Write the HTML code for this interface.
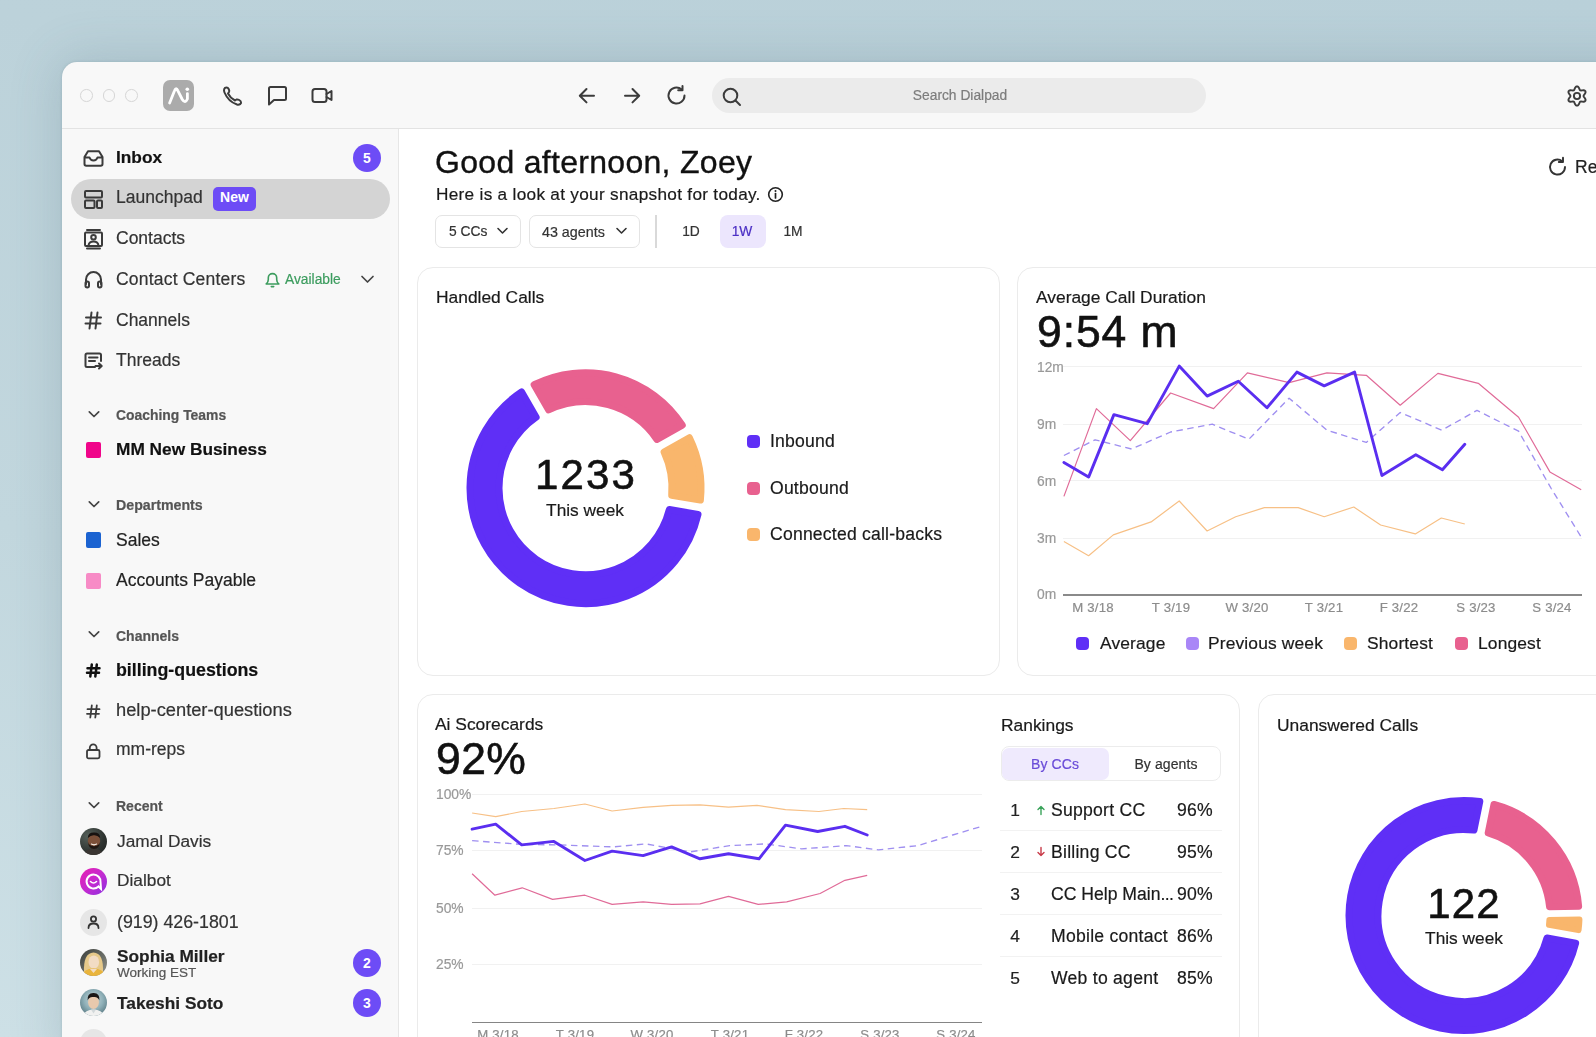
<!DOCTYPE html><html><head><meta charset="utf-8"><style>
html,body{margin:0;padding:0;}
body{width:1596px;height:1037px;overflow:hidden;position:relative;font-family:"Liberation Sans",sans-serif;
background:linear-gradient(15deg,#cde0e6 0%,#c2d7de 35%,#bcd2da 70%,#b9d0d9 100%);}
.a{position:absolute;}
.t{position:absolute;line-height:1;white-space:nowrap;will-change:transform;-webkit-text-stroke:0.2px currentColor;}
svg.a{overflow:visible;}
</style></head><body>
<div class="a" style="left:62px;top:62px;width:1600px;height:1000px;background:#f8f8f8;border-radius:15px 0 0 0;box-shadow:0 0 3px rgba(70,100,115,0.2),0 0 50px 4px rgba(70,100,115,0.2);"></div>
<div class="a" style="left:62px;top:128px;width:1534px;height:1px;background:#e3e3e3;"></div>
<div class="a" style="left:398px;top:129px;width:1px;height:908px;background:#e6e6e6;"></div>
<div class="a" style="left:399px;top:129px;width:1197px;height:908px;background:#ffffff;"></div>
<div class="a" style="left:80.0px;top:89px;width:10.6px;height:10.6px;border:1.9px solid #d6d6d6;border-radius:50%;"></div>
<div class="a" style="left:102.5px;top:89px;width:10.6px;height:10.6px;border:1.9px solid #d6d6d6;border-radius:50%;"></div>
<div class="a" style="left:125.0px;top:89px;width:10.6px;height:10.6px;border:1.9px solid #d6d6d6;border-radius:50%;"></div>
<div class="a" style="left:163px;top:80px;width:31px;height:31px;background:#ababab;border-radius:7px;"></div>
<svg class="a" style="left:163px;top:80px;" width="31" height="31" viewBox="0 0 31 31"><path d="M6.6 23 L11.6 10.6 Q13.1 6.6 14.8 10.6 L19.3 19.5 Q22.2 24 24.4 19 L24.4 13.6" fill="none" stroke="#fff" stroke-width="2.8" stroke-linecap="round" stroke-linejoin="round"/><circle cx="24.3" cy="9.2" r="1.8" fill="#fff"/></svg>
<svg class="a" style="left:222px;top:86px;" width="20" height="20" viewBox="0 0 20 20"><path d="M4.5 1.5 C2 1.5 1.5 4 2.5 6.5 C5 12.5 9 16.5 15 18.5 C17.5 19.2 19.5 17.5 19 16 C18.7 14.5 16 13 14.5 13.5 L13 14.5 C10 13 7.5 10.5 6 7.5 L7 6 C7.8 4.5 6.5 1.5 4.5 1.5 Z" fill="none" stroke="#3b3b3b" stroke-width="2" stroke-linecap="round" stroke-linejoin="round"/></svg>
<svg class="a" style="left:267px;top:86px;" width="21" height="20" viewBox="0 0 21 20"><path d="M2 2.5 Q2 1 3.5 1 L17.5 1 Q19 1 19 2.5 L19 12.5 Q19 14 17.5 14 L7 14 L2 18.5 Z" fill="none" stroke="#3b3b3b" stroke-width="2" stroke-linecap="round" stroke-linejoin="round"/></svg>
<svg class="a" style="left:311px;top:87px;" width="23" height="18" viewBox="0 0 23 18"><rect x="1.5" y="2" width="14" height="13" rx="2.5" fill="none" stroke="#3b3b3b" stroke-width="2" stroke-linecap="round" stroke-linejoin="round"/><path d="M15.5 7 L20.5 4 L20.5 13 L15.5 10" fill="none" stroke="#3b3b3b" stroke-width="2" stroke-linecap="round" stroke-linejoin="round"/></svg>
<svg class="a" style="left:578px;top:87px;" width="18" height="18" viewBox="0 0 18 18"><path d="M16 8.7 L2 8.7 M8.5 2 L1.8 8.7 L8.5 15.4" fill="none" stroke="#3b3b3b" stroke-width="2" stroke-linecap="round" stroke-linejoin="round"/></svg>
<svg class="a" style="left:623px;top:87px;" width="18" height="18" viewBox="0 0 18 18"><path d="M2 8.7 L16 8.7 M9.5 2 L16.2 8.7 L9.5 15.4" fill="none" stroke="#3b3b3b" stroke-width="2" stroke-linecap="round" stroke-linejoin="round"/></svg>
<svg class="a" style="left:666px;top:85px;" width="22" height="22" viewBox="0 0 22 22"><path d="M18.5 10.5 A8 8 0 1 1 15.5 4.3" fill="none" stroke="#3b3b3b" stroke-width="2" stroke-linecap="round" stroke-linejoin="round"/><path d="M16.5 1 L16.5 5.3 L12.2 5.3" fill="none" stroke="#3b3b3b" stroke-width="2" stroke-linecap="round" stroke-linejoin="round"/></svg>
<div class="a" style="left:712px;top:78px;width:494px;height:35px;background:#ebebeb;border-radius:18px;"></div>
<svg class="a" style="left:722px;top:87px;" width="20" height="20" viewBox="0 0 20 20"><circle cx="8.5" cy="8.5" r="6.8" fill="none" stroke="#3b3b3b" stroke-width="2" stroke-linecap="round" stroke-linejoin="round"/><path d="M13.5 13.5 L18 18" fill="none" stroke="#3b3b3b" stroke-width="2" stroke-linecap="round" stroke-linejoin="round"/></svg>
<div class="t" style="left:660.0px;width:600px;text-align:center;top:89.12px;font-size:13.8px;font-weight:400;color:#7c7c7c;letter-spacing:0px;">Search Dialpad</div>
<svg class="a" style="left:1564.6px;top:83.7px;" width="24" height="24" viewBox="0 0 24 24"><path d="M12.00 2.30 L12.98 2.66 L13.79 3.59 L14.35 4.77 L14.77 5.78 L15.25 6.37 L16.00 6.49 L17.09 6.35 L18.39 6.25 L19.60 6.48 L20.40 7.15 L20.58 8.18 L20.17 9.34 L19.44 10.42 L18.77 11.29 L18.50 12.00 L18.77 12.71 L19.44 13.58 L20.17 14.66 L20.58 15.82 L20.40 16.85 L19.60 17.52 L18.39 17.75 L17.09 17.65 L16.00 17.51 L15.25 17.63 L14.77 18.22 L14.35 19.23 L13.79 20.41 L12.98 21.34 L12.00 21.70 L11.02 21.34 L10.21 20.41 L9.65 19.23 L9.23 18.22 L8.75 17.63 L8.00 17.51 L6.91 17.65 L5.61 17.75 L4.40 17.52 L3.60 16.85 L3.42 15.82 L3.83 14.66 L4.56 13.58 L5.23 12.71 L5.50 12.00 L5.23 11.29 L4.56 10.42 L3.83 9.34 L3.42 8.18 L3.60 7.15 L4.40 6.48 L5.61 6.25 L6.91 6.35 L8.00 6.49 L8.75 6.37 L9.23 5.78 L9.65 4.77 L10.21 3.59 L11.02 2.66 Z" fill="none" stroke="#3b3b3b" stroke-width="1.9" stroke-linejoin="round"/><circle cx="12" cy="12" r="3.1" fill="none" stroke="#3b3b3b" stroke-width="1.9"/></svg>
<div class="a" style="left:71px;top:179px;width:319px;height:40px;background:#d4d4d4;border-radius:20px;"></div>
<svg class="a" style="left:83px;top:150px;" width="21" height="17" viewBox="0 0 21 17"><path d="M5 1.2 L16 1.2 L19.5 7 L19.5 14 Q19.5 15.8 17.7 15.8 L3.3 15.8 Q1.5 15.8 1.5 14 L1.5 7 Z M1.5 7.5 L6.5 7.5 Q7.5 10.5 10.5 10.5 Q13.5 10.5 14.5 7.5 L19.5 7.5" fill="none" stroke="#3b3b3b" stroke-width="2" stroke-linecap="round" stroke-linejoin="round"/></svg>
<div class="t" style="left:116.0px;top:149.35px;font-size:17.3px;font-weight:700;color:#111;letter-spacing:0px;">Inbox</div>
<div class="a" style="left:353px;top:144px;width:28px;height:28px;border-radius:50%;background:#6d4cf6;color:#fff;font-size:14px;font-weight:700;line-height:28px;text-align:center;">5</div>
<svg class="a" style="left:84px;top:190px;" width="19" height="19" viewBox="0 0 19 19"><rect x="1" y="1" width="17" height="6.5" rx="1" fill="none" stroke="#3b3b3b" stroke-width="2" stroke-linecap="round" stroke-linejoin="round"/><rect x="1" y="10.5" width="9.5" height="7.5" rx="1" fill="none" stroke="#3b3b3b" stroke-width="2" stroke-linecap="round" stroke-linejoin="round"/><rect x="13" y="10.5" width="5" height="7.5" rx="1" fill="none" stroke="#3b3b3b" stroke-width="2" stroke-linecap="round" stroke-linejoin="round"/></svg>
<div class="t" style="left:116.0px;top:189.28px;font-size:17.5px;font-weight:400;color:#333;letter-spacing:0px;">Launchpad</div>
<div class="a" style="left:213px;top:187px;width:43px;height:24px;border-radius:5px;background:#6d4cf6;color:#fff;font-size:14px;font-weight:700;line-height:21px;text-align:center;">New</div>
<svg class="a" style="left:84px;top:229px;" width="19" height="21" viewBox="0 0 19 21"><path d="M3 1 L16 1 M3 19.5 L16 19.5" fill="none" stroke="#3b3b3b" stroke-width="2" stroke-linecap="round" stroke-linejoin="round"/><rect x="1" y="3.5" width="17" height="13.5" rx="1" fill="none" stroke="#3b3b3b" stroke-width="2" stroke-linecap="round" stroke-linejoin="round"/><circle cx="9.5" cy="8.3" r="2.3" fill="none" stroke="#3b3b3b" stroke-width="2" stroke-linecap="round" stroke-linejoin="round"/><path d="M4.5 16.5 Q5 12.5 9.5 12.5 Q14 12.5 14.5 16.5" fill="none" stroke="#3b3b3b" stroke-width="2" stroke-linecap="round" stroke-linejoin="round"/></svg>
<div class="t" style="left:116.0px;top:230.08px;font-size:17.5px;font-weight:400;color:#333;letter-spacing:0px;">Contacts</div>
<svg class="a" style="left:84px;top:270px;" width="19" height="19" viewBox="0 0 19 19"><path d="M2 14 L2 9.5 A7.5 7.5 0 0 1 17 9.5 L17 14" fill="none" stroke="#3b3b3b" stroke-width="2" stroke-linecap="round" stroke-linejoin="round"/><rect x="1.5" y="11.5" width="3.5" height="6" rx="1.7" fill="none" stroke="#3b3b3b" stroke-width="2" stroke-linecap="round" stroke-linejoin="round"/><rect x="14" y="11.5" width="3.5" height="6" rx="1.7" fill="none" stroke="#3b3b3b" stroke-width="2" stroke-linecap="round" stroke-linejoin="round"/></svg>
<div class="t" style="left:116.0px;top:271.08px;font-size:17.5px;font-weight:400;color:#333;letter-spacing:0.2px;">Contact Centers</div>
<svg class="a" style="left:264px;top:271px;" width="17" height="18" viewBox="0 0 17 18"><path d="M2.2 13 Q4.3 11.5 4.3 8.5 L4.3 6.8 A4.2 4.2 0 0 1 12.7 6.8 L12.7 8.5 Q12.7 11.5 14.8 13 Z M7.3 15.6 L9.7 15.6" fill="none" stroke="#3c9c5e" stroke-width="1.6" stroke-linecap="round" stroke-linejoin="round"/></svg>
<div class="t" style="left:285.0px;top:273.32px;font-size:13.8px;font-weight:400;color:#3c9c5e;letter-spacing:0px;">Available</div>
<svg class="a" style="left:361px;top:275px;" width="13" height="9" viewBox="0 0 13 9"><path d="M1 1.5 L6.5 7 L12 1.5" fill="none" stroke="#444" stroke-width="1.7" stroke-linecap="round" stroke-linejoin="round"/></svg>
<svg class="a" style="left:84px;top:311px;" width="19" height="19" viewBox="0 0 19 19"><path d="M7.5 1.5 L5.5 17.5 M13.5 1.5 L11.5 17.5 M2 6.5 L17 6.5 M1.5 12.5 L16.5 12.5" fill="none" stroke="#3b3b3b" stroke-width="2" stroke-linecap="round" stroke-linejoin="round"/></svg>
<div class="t" style="left:116.0px;top:312.28px;font-size:17.5px;font-weight:400;color:#333;letter-spacing:0px;">Channels</div>
<svg class="a" style="left:84px;top:352px;" width="20" height="20" viewBox="0 0 20 20"><path d="M11 15 L3 15 Q1.5 15 1.5 13.5 L1.5 3 Q1.5 1.5 3 1.5 L15.5 1.5 Q17 1.5 17 3 L17 9" fill="none" stroke="#3b3b3b" stroke-width="2" stroke-linecap="round" stroke-linejoin="round"/><path d="M5 5.5 L13.5 5.5 M5 9 L11 9 M11.5 14 L17.5 14 M15 11.5 L17.7 14 L15 16.5" fill="none" stroke="#3b3b3b" stroke-width="2" stroke-linecap="round" stroke-linejoin="round"/></svg>
<div class="t" style="left:116.0px;top:352.28px;font-size:17.5px;font-weight:400;color:#333;letter-spacing:0px;">Threads</div>
<svg class="a" style="left:87.5px;top:410px;" width="12" height="9" viewBox="0 0 12 9"><path d="M1.3 1.8 L6 6.5 L10.7 1.8" fill="none" stroke="#444" stroke-width="1.7" stroke-linecap="round" stroke-linejoin="round"/></svg>
<div class="t" style="left:116.0px;top:409.33px;font-size:13.9px;font-weight:700;color:#555;letter-spacing:0px;">Coaching Teams</div>
<div class="a" style="left:85.7px;top:442px;width:15.7px;height:15.7px;background:#f0058a;border-radius:2px;"></div>
<div class="t" style="left:116.0px;top:441.25px;font-size:17.3px;font-weight:700;color:#111;letter-spacing:0px;">MM New Business</div>
<svg class="a" style="left:87.5px;top:500px;" width="12" height="9" viewBox="0 0 12 9"><path d="M1.3 1.8 L6 6.5 L10.7 1.8" fill="none" stroke="#444" stroke-width="1.7" stroke-linecap="round" stroke-linejoin="round"/></svg>
<div class="t" style="left:116.0px;top:498.28px;font-size:14.2px;font-weight:700;color:#555;letter-spacing:0px;">Departments</div>
<div class="a" style="left:85.7px;top:532.3px;width:15.7px;height:15.7px;background:#1b63d1;border-radius:2px;"></div>
<div class="t" style="left:116.0px;top:532.28px;font-size:17.5px;font-weight:400;color:#222;letter-spacing:0px;">Sales</div>
<div class="a" style="left:85.7px;top:573px;width:15.7px;height:15.7px;background:#f78bc6;border-radius:2px;"></div>
<div class="t" style="left:116.0px;top:572.18px;font-size:17.5px;font-weight:400;color:#222;letter-spacing:0px;">Accounts Payable</div>
<svg class="a" style="left:87.5px;top:630px;" width="12" height="9" viewBox="0 0 12 9"><path d="M1.3 1.8 L6 6.5 L10.7 1.8" fill="none" stroke="#444" stroke-width="1.7" stroke-linecap="round" stroke-linejoin="round"/></svg>
<div class="t" style="left:116.0px;top:628.65px;font-size:14px;font-weight:700;color:#555;letter-spacing:0px;">Channels</div>
<svg class="a" style="left:86px;top:663px;" width="15" height="15" viewBox="0 0 15 15"><path d="M5.8 1.5 L4.3 13.5 M10.8 1.5 L9.3 13.5 M1.5 5.2 L13.5 5.2 M1 9.8 L13 9.8" fill="none" stroke="#111" stroke-width="2.5" stroke-linecap="round"/></svg>
<div class="t" style="left:116.0px;top:661.93px;font-size:17.8px;font-weight:700;color:#111;letter-spacing:0px;">billing-questions</div>
<svg class="a" style="left:86px;top:703.5px;" width="15" height="15" viewBox="0 0 15 15"><path d="M5.8 1.5 L4.3 13.5 M10.8 1.5 L9.3 13.5 M1.5 5.2 L13.5 5.2 M1 9.8 L13 9.8" fill="none" stroke="#3b3b3b" stroke-width="1.8" stroke-linecap="round"/></svg>
<div class="t" style="left:116.0px;top:700.51px;font-size:18.3px;font-weight:400;color:#333;letter-spacing:0px;">help-center-questions</div>
<svg class="a" style="left:86px;top:743px;" width="15" height="17" viewBox="0 0 15 17"><rect x="1" y="7" width="12.5" height="8.3" rx="1.5" fill="none" stroke="#3b3b3b" stroke-width="1.8"/><path d="M3.8 7 L3.8 4.8 A3.4 3.4 0 0 1 10.6 4.8 L10.6 7" fill="none" stroke="#3b3b3b" stroke-width="1.8"/></svg>
<div class="t" style="left:116.0px;top:741.48px;font-size:17.5px;font-weight:400;color:#333;letter-spacing:0px;">mm-reps</div>
<svg class="a" style="left:87.5px;top:801px;" width="12" height="9" viewBox="0 0 12 9"><path d="M1.3 1.8 L6 6.5 L10.7 1.8" fill="none" stroke="#444" stroke-width="1.7" stroke-linecap="round" stroke-linejoin="round"/></svg>
<div class="t" style="left:116.0px;top:798.85px;font-size:14px;font-weight:700;color:#555;letter-spacing:0px;">Recent</div>
<div class="a" style="left:80px;top:827.5px;width:27px;height:27px;border-radius:50%;background:radial-gradient(circle at 30% 30%,#55605a 0%,#2e3330 60%,#1e2220 100%);"></div>
<svg class="a" style="left:80px;top:827.5px;" width="27" height="27" viewBox="0 0 27 27"><clipPath id="cj"><circle cx="13.5" cy="13.5" r="13.5"/></clipPath><g clip-path="url(#cj)"><path d="M3 28 Q5 20.5 13.5 20.5 Q22 20.5 24 28 Z" fill="#3a3532"/><ellipse cx="14" cy="13" rx="6.2" ry="7.6" fill="#7b5039"/><path d="M7.8 10 Q8 4.5 14 4.6 Q20 4.5 20.2 10 Q17 7 14 7.3 Q11 7 7.8 10Z" fill="#171210"/><path d="M8 14 Q8.5 21 14 21 Q19.5 21 20 14 Q19 18 14 18.2 Q9 18 8 14Z" fill="#1e1612"/><path d="M11.2 16 Q14 17.6 16.8 16 Q14 18 11.2 16Z" fill="#f4efe8" stroke="#f4efe8" stroke-width="0.8"/></g></svg>
<div class="a" style="left:80px;top:867.5px;width:27px;height:27px;border-radius:50%;background:linear-gradient(135deg,#e81fb0 0%,#c52bd0 50%,#8b2fe0 100%);"></div>
<svg class="a" style="left:80px;top:867.5px;" width="27" height="27" viewBox="0 0 27 27"><path d="M13.5 6.5 A7 7 0 1 0 18.5 18.5 L21 21 L20.5 14 A7 7 0 0 0 13.5 6.5 Z" fill="none" stroke="#fff" stroke-width="2"/><path d="M10.5 13.5 Q13.5 16.5 16.5 13.5" fill="none" stroke="#fff" stroke-width="1.6" stroke-linecap="round"/></svg>
<div class="a" style="left:80px;top:908.5px;width:27px;height:27px;border-radius:50%;background:#e6e6e6;"></div>
<svg class="a" style="left:80px;top:908.5px;" width="27" height="27" viewBox="0 0 27 27"><circle cx="13.5" cy="10" r="2.6" fill="none" stroke="#333" stroke-width="1.8"/><path d="M8.5 19 Q8.5 14.5 13.5 14.5 Q18.5 14.5 18.5 19" fill="none" stroke="#333" stroke-width="1.8" stroke-linecap="round"/></svg>
<div class="a" style="left:80px;top:948.8px;width:27px;height:27px;border-radius:50%;overflow:hidden;background:linear-gradient(135deg,#3b3f3b 0%,#6d706a 60%,#9a9a90 100%);"></div>
<svg class="a" style="left:80px;top:948.8px;" width="27" height="27" viewBox="0 0 27 27"><clipPath id="c1"><circle cx="13.5" cy="13.5" r="13.5"/></clipPath><g clip-path="url(#c1)"><path d="M4 24 Q3 4 13.5 3.5 Q24 4 23 24 Z" fill="#e6c98a"/><ellipse cx="13.8" cy="13" rx="5.3" ry="6.6" fill="#f2dcc4"/><path d="M0 29 Q3 19.5 13.5 19.5 Q24 19.5 27 29 Z" fill="#e9b43c"/><path d="M10 20 L13.5 24 L17 20Z" fill="#f2dcc4"/></g></svg>
<div class="a" style="left:80px;top:988.5px;width:27px;height:27px;border-radius:50%;overflow:hidden;background:radial-gradient(circle at 50% 40%,#c9d8dc 0%,#8fb0b8 45%,#3f5f68 100%);"></div>
<svg class="a" style="left:80px;top:988.5px;" width="27" height="27" viewBox="0 0 27 27"><clipPath id="c2"><circle cx="13.5" cy="13.5" r="13.5"/></clipPath><g clip-path="url(#c2)"><ellipse cx="13.5" cy="13.3" rx="5.4" ry="6.8" fill="#e8c9ad"/><path d="M7.6 11.5 Q7 3.8 13.5 4 Q20 3.8 19.4 11.5 Q18 7.5 13.5 8 Q9 7.5 7.6 11.5Z" fill="#1a1716"/><path d="M2 29 Q4 20.5 13.5 20.5 Q23 20.5 25 29 Z" fill="#f1f1f0"/><path d="M11 20.5 L13.5 24.5 L16 20.5 Z" fill="#d2d8da"/></g></svg>
<div class="a" style="left:80px;top:1029px;width:27px;height:27px;border-radius:50%;background:#e6e6e6;"></div>
<div class="t" style="left:116.5px;top:833.25px;font-size:17.3px;font-weight:400;color:#333;letter-spacing:0px;">Jamal Davis</div>
<div class="t" style="left:116.5px;top:872.45px;font-size:17.3px;font-weight:400;color:#333;letter-spacing:0px;">Dialbot</div>
<div class="t" style="left:116.5px;top:914.13px;font-size:17.8px;font-weight:400;color:#333;letter-spacing:0px;">(919) 426-1801</div>
<div class="t" style="left:116.5px;top:948.05px;font-size:17.3px;font-weight:700;color:#222;letter-spacing:0px;">Sophia Miller</div>
<div class="t" style="left:116.5px;top:966.07px;font-size:13.5px;font-weight:400;color:#555;letter-spacing:0px;">Working EST</div>
<div class="t" style="left:116.5px;top:995.05px;font-size:17.3px;font-weight:700;color:#222;letter-spacing:0px;">Takeshi Soto</div>
<div class="a" style="left:353px;top:948.5px;width:28px;height:28px;border-radius:50%;background:#6d4cf6;color:#fff;font-size:14px;font-weight:700;line-height:28px;text-align:center;">2</div>
<div class="a" style="left:353px;top:988.5px;width:28px;height:28px;border-radius:50%;background:#6d4cf6;color:#fff;font-size:14px;font-weight:700;line-height:28px;text-align:center;">3</div>
<div class="t" style="left:435.0px;top:146.11px;font-size:32px;font-weight:400;color:#111;letter-spacing:0.3px;-webkit-text-stroke:0.35px #111;">Good afternoon, Zoey</div>
<div class="t" style="left:435.5px;top:185.74px;font-size:17.2px;font-weight:400;color:#1a1a1a;letter-spacing:0.3px;">Here is a look at your snapshot for today.</div>
<svg class="a" style="left:767px;top:186px;" width="17" height="17" viewBox="0 0 17 17"><circle cx="8.5" cy="8.5" r="6.8" fill="none" stroke="#222" stroke-width="1.6"/><path d="M8.5 7.5 L8.5 12" stroke="#222" stroke-width="1.7" stroke-linecap="round"/><circle cx="8.5" cy="5" r="1" fill="#222"/></svg>
<div class="a" style="left:435px;top:215px;width:86px;height:33px;box-sizing:border-box;border:1px solid #e4e4e4;border-radius:7px;background:#fff;"></div>
<div class="t" style="left:448.8px;top:225.02px;font-size:13.8px;font-weight:400;color:#333;letter-spacing:0px;">5 CCs</div>
<svg class="a" style="left:496px;top:226px;" width="13" height="10" viewBox="0 0 13 10"><path d="M2 2.5 L6.5 7 L11 2.5" fill="none" stroke="#333" stroke-width="1.6" stroke-linecap="round" stroke-linejoin="round"/></svg>
<div class="a" style="left:528.5px;top:215px;width:111.5px;height:33px;box-sizing:border-box;border:1px solid #e4e4e4;border-radius:7px;background:#fff;"></div>
<div class="t" style="left:542.3px;top:224.59px;font-size:14.3px;font-weight:400;color:#333;letter-spacing:0px;">43 agents</div>
<svg class="a" style="left:615px;top:226px;" width="13" height="10" viewBox="0 0 13 10"><path d="M2 2.5 L6.5 7 L11 2.5" fill="none" stroke="#333" stroke-width="1.6" stroke-linecap="round" stroke-linejoin="round"/></svg>
<div class="a" style="left:654.5px;top:215px;width:2px;height:33px;background:#d9d9d9;"></div>
<div class="t" style="left:391.0px;width:600px;text-align:center;top:225.02px;font-size:13.8px;font-weight:400;color:#333;letter-spacing:0px;">1D</div>
<div class="a" style="left:719.5px;top:215px;width:46px;height:33px;background:#ece6fd;border-radius:8px;"></div>
<div class="t" style="left:442.4px;width:600px;text-align:center;top:225.02px;font-size:13.8px;font-weight:400;color:#4b2fc4;letter-spacing:0px;">1W</div>
<div class="t" style="left:493.3px;width:600px;text-align:center;top:225.02px;font-size:13.8px;font-weight:400;color:#333;letter-spacing:0px;">1M</div>
<svg class="a" style="left:1547px;top:156px;" width="22" height="22" viewBox="0 0 22 22"><path d="M18 11 A7.5 7.5 0 1 1 15.2 5.2" fill="none" stroke="#333" stroke-width="1.9" stroke-linecap="round"/><path d="M16 1.8 L16 6 L11.8 6" fill="none" stroke="#333" stroke-width="1.9" stroke-linecap="round" stroke-linejoin="round"/></svg>
<div class="t" style="left:1575.0px;top:158.68px;font-size:17.5px;font-weight:400;color:#222;letter-spacing:0px;">Re</div>
<div class="a" style="left:417px;top:267px;width:583px;height:409px;box-sizing:border-box;border:1.5px solid #ebebeb;border-radius:16px;background:#fff;"></div>
<div class="a" style="left:1017px;top:267px;width:700px;height:409px;box-sizing:border-box;border:1.5px solid #ebebeb;border-radius:16px;background:#fff;"></div>
<div class="a" style="left:416.5px;top:694px;width:823px;height:500px;box-sizing:border-box;border:1.5px solid #ebebeb;border-radius:16px;background:#fff;"></div>
<div class="a" style="left:1257.5px;top:694px;width:500px;height:500px;box-sizing:border-box;border:1.5px solid #ebebeb;border-radius:16px;background:#fff;"></div>
<div class="t" style="left:435.5px;top:289.07px;font-size:17.4px;font-weight:400;color:#1a1a1a;letter-spacing:0px;">Handled Calls</div>
<svg class="a" style="left:0px;top:0px;" width="1596" height="1037" viewBox="0 0 1596 1037"><path d="M698.00 514.37 A115.5 115.5 0 1 1 521.59 391.99 L536.13 417.17 A86.5 86.5 0 1 0 669.32 509.57 Z" fill="#5f2ff6" stroke="#5f2ff6" stroke-width="7.0" stroke-linejoin="round"/><path d="M534.14 384.75 A115.5 115.5 0 0 1 682.26 425.13 L656.96 439.45 A86.5 86.5 0 0 0 548.67 409.93 Z" fill="#e8618f" stroke="#e8618f" stroke-width="7.0" stroke-linejoin="round"/><path d="M689.40 437.74 A115.5 115.5 0 0 1 700.39 500.08 L671.71 495.28 A86.5 86.5 0 0 0 664.09 452.06 Z" fill="#f9b66c" stroke="#f9b66c" stroke-width="7.0" stroke-linejoin="round"/></svg>
<div class="t" style="left:285.5px;width:600px;text-align:center;top:454.44px;font-size:42px;font-weight:400;color:#111;letter-spacing:2.2px;-webkit-text-stroke:0.6px #111;">1233</div>
<div class="t" style="left:285.0px;width:600px;text-align:center;top:502.25px;font-size:17.3px;font-weight:400;color:#1a1a1a;letter-spacing:0px;">This week</div>
<div class="a" style="left:747px;top:435.2px;width:13px;height:13px;background:#5f2ff6;border-radius:4px;"></div>
<div class="t" style="left:769.5px;top:433.30px;font-size:17.6px;font-weight:400;color:#1a1a1a;letter-spacing:0.2px;">Inbound</div>
<div class="a" style="left:747px;top:481.7px;width:13px;height:13px;background:#e8618f;border-radius:4px;"></div>
<div class="t" style="left:769.5px;top:479.80px;font-size:17.6px;font-weight:400;color:#1a1a1a;letter-spacing:0.2px;">Outbound</div>
<div class="a" style="left:747px;top:528.2px;width:13px;height:13px;background:#f9b66c;border-radius:4px;"></div>
<div class="t" style="left:769.5px;top:526.30px;font-size:17.6px;font-weight:400;color:#1a1a1a;letter-spacing:0.2px;">Connected call-backs</div>
<div class="t" style="left:1036.0px;top:289.07px;font-size:17.4px;font-weight:400;color:#1a1a1a;letter-spacing:0px;">Average Call Duration</div>
<div class="t" style="left:1036.5px;top:310.42px;font-size:44.5px;font-weight:400;color:#111;letter-spacing:0.9px;-webkit-text-stroke:0.6px #111;">9:54 m</div>
<div class="t" style="left:1037.0px;top:360.52px;font-size:13.8px;font-weight:400;color:#999;letter-spacing:0px;">12m</div>
<div class="a" style="left:1063px;top:366.4px;width:519px;height:1px;background:#f1f1f1;"></div>
<div class="t" style="left:1037.0px;top:417.82px;font-size:13.8px;font-weight:400;color:#999;letter-spacing:0px;">9m</div>
<div class="a" style="left:1063px;top:423.7px;width:519px;height:1px;background:#f1f1f1;"></div>
<div class="t" style="left:1037.0px;top:474.52px;font-size:13.8px;font-weight:400;color:#999;letter-spacing:0px;">6m</div>
<div class="a" style="left:1063px;top:480.4px;width:519px;height:1px;background:#f1f1f1;"></div>
<div class="t" style="left:1037.0px;top:531.62px;font-size:13.8px;font-weight:400;color:#999;letter-spacing:0px;">3m</div>
<div class="a" style="left:1063px;top:537.5px;width:519px;height:1px;background:#f1f1f1;"></div>
<div class="t" style="left:1037.0px;top:588.42px;font-size:13.8px;font-weight:400;color:#999;letter-spacing:0px;">0m</div>
<div class="a" style="left:1063px;top:593.8px;width:519px;height:2px;background:#8a8a8a;"></div>
<div class="t" style="left:793.0px;width:600px;text-align:center;top:601.02px;font-size:13.2px;font-weight:400;color:#8c8c8c;letter-spacing:0.2px;">M 3/18</div>
<div class="t" style="left:870.5px;width:600px;text-align:center;top:601.02px;font-size:13.2px;font-weight:400;color:#8c8c8c;letter-spacing:0.2px;">T 3/19</div>
<div class="t" style="left:947.0px;width:600px;text-align:center;top:601.02px;font-size:13.2px;font-weight:400;color:#8c8c8c;letter-spacing:0.2px;">W 3/20</div>
<div class="t" style="left:1024.3px;width:600px;text-align:center;top:601.02px;font-size:13.2px;font-weight:400;color:#8c8c8c;letter-spacing:0.2px;">T 3/21</div>
<div class="t" style="left:1099.0px;width:600px;text-align:center;top:601.02px;font-size:13.2px;font-weight:400;color:#8c8c8c;letter-spacing:0.2px;">F 3/22</div>
<div class="t" style="left:1175.5px;width:600px;text-align:center;top:601.02px;font-size:13.2px;font-weight:400;color:#8c8c8c;letter-spacing:0.2px;">S 3/23</div>
<div class="t" style="left:1251.5px;width:600px;text-align:center;top:601.02px;font-size:13.2px;font-weight:400;color:#8c8c8c;letter-spacing:0.2px;">S 3/24</div>
<svg class="a" style="left:0px;top:0px;" width="1596" height="1037" viewBox="0 0 1596 1037"><polyline points="1063.9,541.4 1088.6,555.7 1113.3,534.9 1151.1,521.9 1179.2,501.0 1207.1,531.0 1235.7,516.7 1264.4,507.6 1298.2,507.6 1324.2,516.7 1353.8,507.0 1380.6,525.0 1415.3,533.9 1441.3,518.0 1464.8,524.0" fill="none" stroke="#f7c086" stroke-width="1.2" stroke-linejoin="round"/><polyline points="1063.9,496.4 1096.4,408.6 1130.3,440.6 1170.6,393.0 1213.6,408.6 1247.4,372.9 1289.1,382.6 1326.9,372.9 1366.3,375.3 1400.2,405.2 1437.9,373.4 1478.3,383.3 1518.6,417.2 1549.9,471.9 1581.2,489.8" fill="none" stroke="#e06b98" stroke-width="1.2" stroke-linejoin="round"/><polyline points="1063.9,455.5 1095.1,439.8 1131.6,449.0 1170.6,432.0 1212.3,424.2 1248.8,439.3 1289.1,398.2 1326.9,430.2 1366.3,442.4 1400.2,412.5 1441.8,430.2 1477.0,410.4 1518.6,431.2 1551.2,488.5 1581.2,537.0" fill="none" stroke="#9f8ff0" stroke-width="1.35" stroke-dasharray="6.5 4.5" stroke-linejoin="round"/><polyline points="1063.9,462.5 1088.6,477.1 1113.9,414.6 1147.2,423.7 1179.2,366.1 1207.1,396.1 1238.3,381.2 1267.0,407.8 1296.9,372.1 1324.2,385.9 1354.6,372.1 1381.9,475.5 1415.8,454.7 1442.4,469.8 1464.8,444.3" fill="none" stroke="#5a2ef0" stroke-width="2.9" stroke-linejoin="round" stroke-linecap="round"/></svg>
<div class="a" style="left:1076px;top:637.1px;width:13px;height:13px;background:#5f2ff6;border-radius:4px;"></div>
<div class="t" style="left:1100.0px;top:635.37px;font-size:17.4px;font-weight:400;color:#1a1a1a;letter-spacing:0.15px;">Average</div>
<div class="a" style="left:1186px;top:637.1px;width:13px;height:13px;background:#a986f7;border-radius:4px;"></div>
<div class="t" style="left:1208.0px;top:635.37px;font-size:17.4px;font-weight:400;color:#1a1a1a;letter-spacing:0.15px;">Previous week</div>
<div class="a" style="left:1344px;top:637.1px;width:13px;height:13px;background:#f9b66c;border-radius:4px;"></div>
<div class="t" style="left:1367.0px;top:635.37px;font-size:17.4px;font-weight:400;color:#1a1a1a;letter-spacing:0.15px;">Shortest</div>
<div class="a" style="left:1454.5px;top:637.1px;width:13px;height:13px;background:#e8618f;border-radius:4px;"></div>
<div class="t" style="left:1478.0px;top:635.37px;font-size:17.4px;font-weight:400;color:#1a1a1a;letter-spacing:0.15px;">Longest</div>
<div class="t" style="left:435.0px;top:716.37px;font-size:17.4px;font-weight:400;color:#1a1a1a;letter-spacing:0px;">Ai Scorecards</div>
<div class="t" style="left:435.5px;top:737.12px;font-size:44.5px;font-weight:400;color:#111;letter-spacing:0.4px;-webkit-text-stroke:0.6px #111;">92%</div>
<div class="t" style="left:436.0px;top:787.72px;font-size:13.8px;font-weight:400;color:#999;letter-spacing:0px;">100%</div>
<div class="a" style="left:472px;top:793.6px;width:510px;height:1px;background:#f1f1f1;"></div>
<div class="t" style="left:436.0px;top:844.22px;font-size:13.8px;font-weight:400;color:#999;letter-spacing:0px;">75%</div>
<div class="a" style="left:472px;top:850.1px;width:510px;height:1px;background:#f1f1f1;"></div>
<div class="t" style="left:436.0px;top:901.72px;font-size:13.8px;font-weight:400;color:#999;letter-spacing:0px;">50%</div>
<div class="a" style="left:472px;top:907.6px;width:510px;height:1px;background:#f1f1f1;"></div>
<div class="t" style="left:436.0px;top:958.22px;font-size:13.8px;font-weight:400;color:#999;letter-spacing:0px;">25%</div>
<div class="a" style="left:472px;top:964.1px;width:510px;height:1px;background:#f1f1f1;"></div>
<div class="a" style="left:472px;top:1021.6px;width:510px;height:1.4px;background:#858585;"></div>
<div class="t" style="left:198.1px;width:600px;text-align:center;top:1027.82px;font-size:13.2px;font-weight:400;color:#8c8c8c;letter-spacing:0.2px;">M 3/18</div>
<div class="t" style="left:275.0px;width:600px;text-align:center;top:1027.82px;font-size:13.2px;font-weight:400;color:#8c8c8c;letter-spacing:0.2px;">T 3/19</div>
<div class="t" style="left:351.8px;width:600px;text-align:center;top:1027.82px;font-size:13.2px;font-weight:400;color:#8c8c8c;letter-spacing:0.2px;">W 3/20</div>
<div class="t" style="left:429.7px;width:600px;text-align:center;top:1027.82px;font-size:13.2px;font-weight:400;color:#8c8c8c;letter-spacing:0.2px;">T 3/21</div>
<div class="t" style="left:504.0px;width:600px;text-align:center;top:1027.82px;font-size:13.2px;font-weight:400;color:#8c8c8c;letter-spacing:0.2px;">F 3/22</div>
<div class="t" style="left:580.3px;width:600px;text-align:center;top:1027.82px;font-size:13.2px;font-weight:400;color:#8c8c8c;letter-spacing:0.2px;">S 3/23</div>
<div class="t" style="left:656.4px;width:600px;text-align:center;top:1027.82px;font-size:13.2px;font-weight:400;color:#8c8c8c;letter-spacing:0.2px;">S 3/24</div>
<svg class="a" style="left:0px;top:0px;" width="1596" height="1037" viewBox="0 0 1596 1037"><polyline points="472.1,813.0 495.7,816.7 521.7,811.5 553.9,808.5 584.9,804.0 612.1,811.0 643.1,807.3 671.6,805.3 700.0,804.8 728.5,807.2 757.0,805.3 785.5,809.7 818.9,811.5 843.7,808.5 867.2,809.7" fill="none" stroke="#f7c086" stroke-width="1.2" stroke-linejoin="round"/><polyline points="472.1,873.7 494.9,895.2 522.2,887.8 552.6,899.4 584.9,895.2 612.1,904.4 643.1,901.9 671.6,904.4 700.0,903.9 728.5,896.4 758.2,904.4 786.7,901.9 820.1,893.5 844.9,880.3 867.2,875.4" fill="none" stroke="#e06b98" stroke-width="1.2" stroke-linejoin="round"/><polyline points="472.1,840.7 521.7,844.4 558.8,844.9 613.4,846.9 645.6,843.9 690.2,851.9 729.7,845.6 765.6,843.9 801.6,848.9 846.1,845.6 878.4,849.9 918.0,845.6 952.7,835.0 983.6,825.8" fill="none" stroke="#9f8ff0" stroke-width="1.35" stroke-dasharray="6.5 4.5" stroke-linejoin="round"/><polyline points="472.1,829.1 495.7,824.1 521.7,844.9 553.9,841.4 584.9,860.5 612.1,851.1 643.1,855.6 671.6,846.9 700.0,858.8 728.5,853.8 759.0,858.8 785.5,825.1 817.7,831.5 844.9,826.3 867.2,835.0" fill="none" stroke="#5a2ef0" stroke-width="2.9" stroke-linejoin="round" stroke-linecap="round"/></svg>
<div class="t" style="left:1001.0px;top:717.37px;font-size:17.4px;font-weight:400;color:#1a1a1a;letter-spacing:0px;">Rankings</div>
<div class="a" style="left:1000.5px;top:746px;width:220.5px;height:35px;box-sizing:border-box;border:1.5px solid #ececec;border-radius:8px;background:#fff;"></div>
<div class="a" style="left:1002px;top:747.5px;width:106.5px;height:32px;background:#efeafd;border-radius:7px;"></div>
<div class="t" style="left:755.0px;width:600px;text-align:center;top:756.65px;font-size:14px;font-weight:400;color:#6a4cd8;letter-spacing:0.1px;">By CCs</div>
<div class="t" style="left:865.5px;width:600px;text-align:center;top:756.65px;font-size:14px;font-weight:400;color:#333;letter-spacing:0.1px;">By agents</div>
<div class="t" style="left:714.5px;width:600px;text-align:center;top:801.87px;font-size:17.4px;font-weight:400;color:#222;letter-spacing:0px;">1</div>
<div class="t" style="left:1050.5px;top:801.70px;font-size:17.6px;font-weight:400;color:#1a1a1a;letter-spacing:0.25px;">Support CC</div>
<div class="t" style="left:612.5px;width:600px;text-align:right;top:801.70px;font-size:17.6px;font-weight:400;color:#1a1a1a;letter-spacing:0.3px;">96%</div>
<svg class="a" style="left:1035.5px;top:804.6px;" width="10" height="10" viewBox="0 0 10 10"><path d="M5 9.5 L5 1.5 M2 4.5 L5 1.5 L8 4.5" fill="none" stroke="#3aa35a" stroke-width="1.4" stroke-linecap="round" stroke-linejoin="round"/></svg>
<div class="a" style="left:1000px;top:830.1px;width:222px;height:1px;background:#f2f2f2;"></div>
<div class="t" style="left:714.5px;width:600px;text-align:center;top:843.82px;font-size:17.4px;font-weight:400;color:#222;letter-spacing:0px;">2</div>
<div class="t" style="left:1050.5px;top:843.65px;font-size:17.6px;font-weight:400;color:#1a1a1a;letter-spacing:0.25px;">Billing CC</div>
<div class="t" style="left:612.5px;width:600px;text-align:right;top:843.65px;font-size:17.6px;font-weight:400;color:#1a1a1a;letter-spacing:0.3px;">95%</div>
<svg class="a" style="left:1035.5px;top:847.0500000000001px;" width="10" height="10" viewBox="0 0 10 10"><path d="M5 0.5 L5 8.5 M2 5.5 L5 8.5 L8 5.5" fill="none" stroke="#c83a48" stroke-width="1.4" stroke-linecap="round" stroke-linejoin="round"/></svg>
<div class="a" style="left:1000px;top:872.0500000000001px;width:222px;height:1px;background:#f2f2f2;"></div>
<div class="t" style="left:714.5px;width:600px;text-align:center;top:885.77px;font-size:17.4px;font-weight:400;color:#222;letter-spacing:0px;">3</div>
<div class="t" style="left:1050.5px;top:885.60px;font-size:17.6px;font-weight:400;color:#1a1a1a;letter-spacing:0px;">CC Help Main<span style="letter-spacing:-0.6px">...</span></div>
<div class="t" style="left:612.5px;width:600px;text-align:right;top:885.60px;font-size:17.6px;font-weight:400;color:#1a1a1a;letter-spacing:0.3px;">90%</div>
<div class="a" style="left:1000px;top:914.0px;width:222px;height:1px;background:#f2f2f2;"></div>
<div class="t" style="left:714.5px;width:600px;text-align:center;top:927.72px;font-size:17.4px;font-weight:400;color:#222;letter-spacing:0px;">4</div>
<div class="t" style="left:1050.5px;top:927.55px;font-size:17.6px;font-weight:400;color:#1a1a1a;letter-spacing:0.25px;">Mobile contact</div>
<div class="t" style="left:612.5px;width:600px;text-align:right;top:927.55px;font-size:17.6px;font-weight:400;color:#1a1a1a;letter-spacing:0.3px;">86%</div>
<div class="a" style="left:1000px;top:955.95px;width:222px;height:1px;background:#f2f2f2;"></div>
<div class="t" style="left:714.5px;width:600px;text-align:center;top:969.67px;font-size:17.4px;font-weight:400;color:#222;letter-spacing:0px;">5</div>
<div class="t" style="left:1050.5px;top:969.50px;font-size:17.6px;font-weight:400;color:#1a1a1a;letter-spacing:0.25px;">Web to agent</div>
<div class="t" style="left:612.5px;width:600px;text-align:right;top:969.50px;font-size:17.6px;font-weight:400;color:#1a1a1a;letter-spacing:0.3px;">85%</div>
<div class="t" style="left:1276.5px;top:717.37px;font-size:17.4px;font-weight:400;color:#1a1a1a;letter-spacing:0px;">Unanswered Calls</div>
<svg class="a" style="left:0px;top:0px;" width="1596" height="1037" viewBox="0 0 1596 1037"><path d="M1575.63 943.15 A115.0 115.0 0 1 1 1479.78 801.59 L1473.99 830.08 A86.0 86.0 0 1 0 1547.02 937.95 Z" fill="#5f2ff6" stroke="#5f2ff6" stroke-width="7.0" stroke-linejoin="round"/><path d="M1493.98 804.48 A115.0 115.0 0 0 1 1578.63 906.25 L1549.56 906.76 A86.0 86.0 0 0 0 1488.18 832.97 Z" fill="#e8618f" stroke="#e8618f" stroke-width="7.0" stroke-linejoin="round"/><path d="M1579.43 919.58 A115.5 115.5 0 0 1 1578.57 930.12 L1549.00 924.75 A85.5 85.5 0 0 0 1549.38 920.11 Z" fill="#f9b66c" stroke="#f9b66c" stroke-width="6" stroke-linejoin="round"/></svg>
<div class="t" style="left:1163.5px;width:600px;text-align:center;top:882.74px;font-size:42px;font-weight:400;color:#111;letter-spacing:1.2px;-webkit-text-stroke:0.6px #111;">122</div>
<div class="t" style="left:1163.5px;width:600px;text-align:center;top:930.25px;font-size:17.3px;font-weight:400;color:#1a1a1a;letter-spacing:0px;">This week</div>
</body></html>
